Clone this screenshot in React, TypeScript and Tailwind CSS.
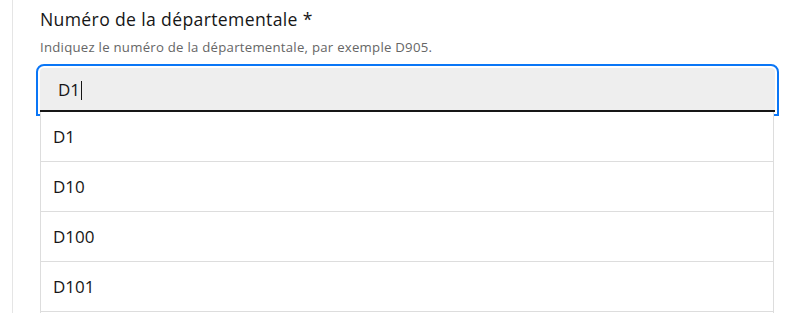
const suggestions = ["D1", "D10", "D100", "D101"];

export default function App() {
  return (
    <div
      className="h-[313px] w-[800px] overflow-hidden bg-white"
      style={{ fontFamily: '"Open Sans", "Noto Sans", sans-serif' }}
    >
      <div className="ml-[12px] h-full border-l border-[#e5e5e5] pl-[27px] pt-[7px]">
        <div className="relative w-[735px]">
          <label
            htmlFor="departementale"
            className="block text-[17.6px] leading-[24px] tracking-[0.35px] text-[#161616]"
          >
            Numéro de la départementale *
          </label>
          <p className="mt-[6px] text-[13.2px] leading-[20px] tracking-[0.25px] text-[#666666]">
            Indiquez le numéro de la départementale, par exemple D905.
          </p>

          <div className="mt-[11px] flex h-[44px] items-center rounded-t-[4px] bg-[#eeeeee] pl-[18px] text-[17px] text-[#161616] shadow-[inset_0_-2px_0_0_#161616] outline-2 outline-offset-2 outline-[#0a76f6] outline-solid">
            <span id="departementale">D1</span>
            <span className="ml-px h-[19px] w-px bg-[#161616]" />
          </div>

          <ul className="absolute left-0 top-[105px] w-[734px] border-x border-[#dddddd] bg-white">
            {suggestions.map((s) => (
              <li
                key={s}
                className="flex h-[50px] items-center border-b border-[#dddddd] pl-[12px] text-[17px] text-[#161616]"
              >
                {s}
              </li>
            ))}
            <li className="h-[20px]" />
          </ul>
        </div>
      </div>
    </div>
  );
}
